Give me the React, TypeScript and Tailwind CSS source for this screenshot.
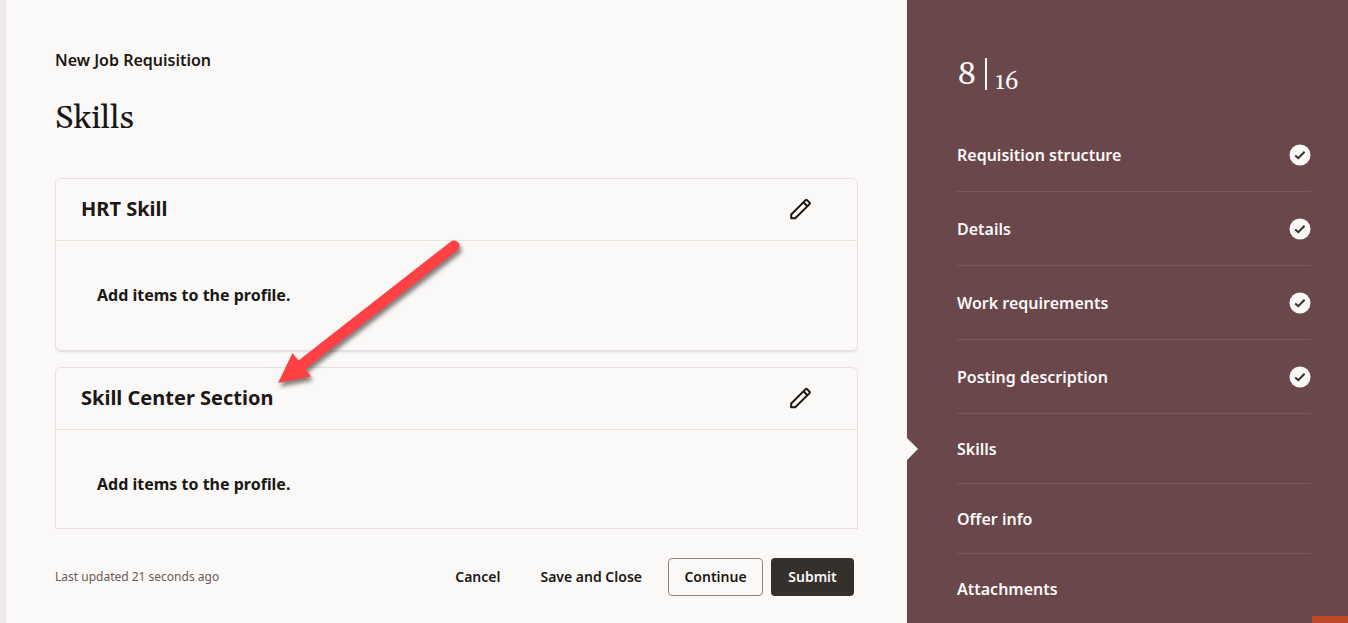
import React from "react";

const steps = [
  { label: "Requisition structure", done: true },
  { label: "Details", done: true },
  { label: "Work requirements", done: true },
  { label: "Posting description", done: true },
  { label: "Skills", current: true },
  { label: "Offer info" },
  { label: "Attachments" },
];

const sections = ["HRT Skill", "Skill Center Section"];

const PencilIcon = () => (
  <svg viewBox="0 0 24 24" className="w-6 h-6" fill="none" stroke="#1b1816" strokeWidth="2" strokeLinejoin="round">
    <path d="M2.200 21.300V17.500L16.600 3.100Q17.300 2.400 18 3.100L20.600 5.700Q21.300 6.400 20.600 7.100L6.200 21.300Z" />
    <path d="M14.400 5.300L18.400 9.300" />
  </svg>
);

const CheckBadge = () => (
  <svg viewBox="0 0 22 22" className="w-[22px] h-[22px]" role="img" aria-label="Completed">
    <circle cx="11" cy="11" r="10.500" fill="#fbf9f8" />
    <path d="M6.200 11.400L9.300 14.200L15.600 7.800" fill="none" stroke="#3a2d2d" strokeWidth="2" />
  </svg>
);

const SkillCard = ({ title }: { title: string }) => (
  <section className="rounded-md border border-[#e6e1e0] shadow-sm">
    <div className="flex items-center justify-between h-[62px] pl-[25px] pr-11 pb-px border-b border-[#e8e4e2]">
      <h2 className="text-xl font-bold">{title}</h2>
      <button type="button" aria-label={`Edit ${title}`}>
        <PencilIcon />
      </button>
    </div>
    <p className="h-[109px] px-[41px] pb-px flex items-center text-base font-bold">Add items to the profile.</p>
  </section>
);

const Arrow = () => (
  <svg
    viewBox="0 0 200 160"
    className="absolute left-[270px] top-[234px] w-[200px] h-[160px] pointer-events-none"
    style={{ filter: "drop-shadow(2px 4px 2px rgba(40,20,20,0.55))" }}
    aria-hidden="true"
  >
    <path d="M184 12L29 133" stroke="#ff4144" strokeWidth="11" strokeLinecap="round" />
    <path d="M8 149L22.500 119L41 142.500Z" fill="#ff4144" />
  </svg>
);

const App = () => {
  return (
    <div
      className="relative flex h-screen overflow-hidden bg-[#faf9f7] text-[#1b1816]"
      style={{ fontFamily: '"Noto Sans", "Open Sans", sans-serif' }}
    >
      <div className="w-[6px] shrink-0 bg-[#eeeae9]" />

      <main className="flex-1 min-w-0 flex flex-col px-[49px] pt-12">
        <p className="text-base leading-6 font-semibold">New Job Requisition</p>
        <h1 className="mt-6 pt-[2px] text-[33px] leading-10 font-['Gelasio','Liberation_Serif',serif]">Skills</h1>

        <div className="flex-1 min-h-0 overflow-hidden mt-10 -mx-1 px-1 flex flex-col">
          <div className="flex-1 min-h-0 overflow-hidden border-b border-[#e6e1e0] space-y-4">
            {sections.map((title) => (
              <SkillCard key={title} title={title} />
            ))}
          </div>
        </div>

        {/* Footer */}
        <div className="flex items-center shrink-0 pt-[29px] pb-[27px] pr-1 text-sm font-semibold">
          <p className="flex-1 text-xs font-normal text-[#665b59]">Last updated 21 seconds ago</p>
          <button type="button" className="h-[38px] px-5">Cancel</button>
          <button type="button" className="h-[38px] px-5 mr-1.5">Save and Close</button>
          <button type="button" className="h-[38px] w-[95px] rounded border border-[#8f8482]">Continue</button>
          <button type="button" className="h-[38px] w-[83px] ml-2 rounded bg-[#36302d] text-[#faf9f7]">Submit</button>
        </div>
      </main>

      <aside className="relative w-[441px] shrink-0 bg-[#6a474a] text-[#fbf9f8] pl-[50px] pr-[37px] pt-[54px]">
        <div className="flex gap-2 h-16 pt-1 font-['Gelasio','Liberation_Serif',serif]">
          <span className="text-[33px] leading-8">8</span>
          <span className="w-[2px] h-8 bg-[#fbf9f8]" />
          <span className="text-2xl leading-6 pt-3">16</span>
        </div>

        <ol>
          {steps.map((step) => (
            <li
              key={step.label}
              className={`relative flex items-center justify-between border-b border-[#7a585b] ${
                step.done ? "h-[74px]" : "h-[70px]"
              }`}
            >
              {step.current && (
                <svg viewBox="0 0 11 22" className="absolute -left-[50px] w-[11px] h-[22px]" aria-hidden="true">
                  <path d="M0 0L11 11L0 22Z" fill="#faf9f7" />
                </svg>
              )}
              <a href="#" className="text-base font-semibold">{step.label}</a>
              {step.done && <CheckBadge />}
            </li>
          ))}
        </ol>

        <div className="absolute right-0 bottom-0 w-9 h-[7px] bg-[#c04a28]" />
      </aside>

      <Arrow />
    </div>
  );
};

export default App;
